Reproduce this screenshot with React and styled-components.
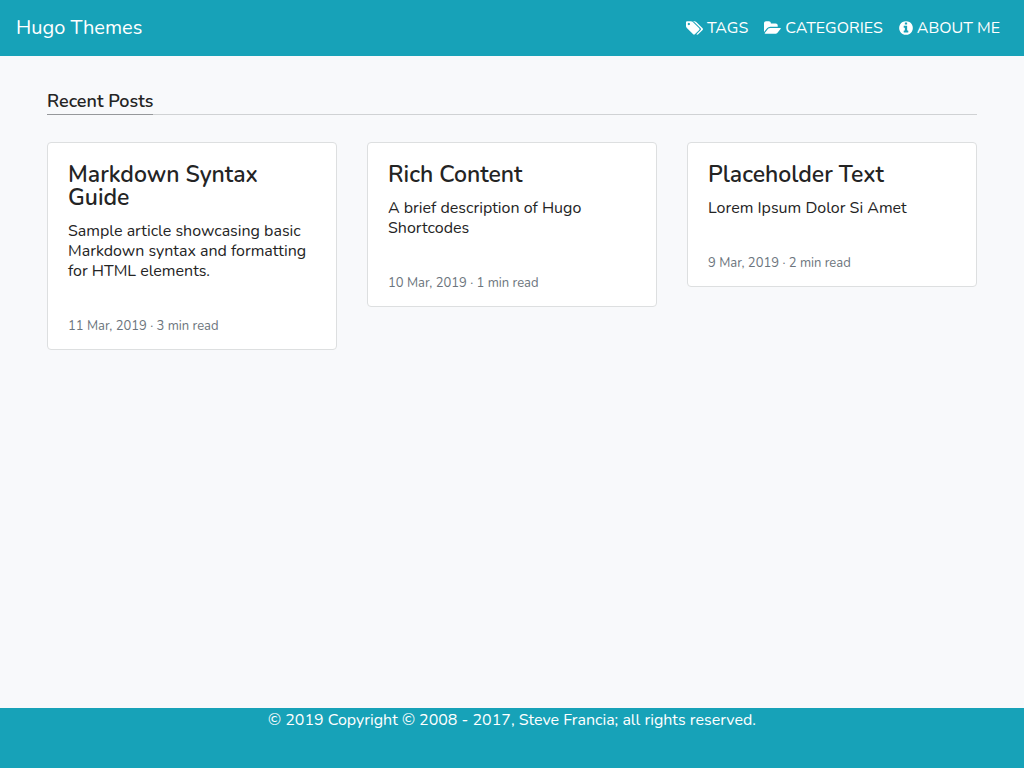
import React from "react";
import styled, { createGlobalStyle } from "styled-components";

const GlobalStyle = createGlobalStyle`
  *, *::before, *::after { box-sizing: border-box; }
  body {
    margin: 0;
    background: #f8f9fb;
    color: #242424;
    font-family: Nunito, Lato, "Noto Sans", sans-serif;
    font-size: 16px;
    line-height: 24px;
  }
`;

const Page = styled.div`
  display: flex;
  flex-direction: column;
  min-height: 100vh;
`;

const Navbar = styled.header`
  display: flex;
  align-items: center;
  justify-content: space-between;
  min-height: 56px;
  padding: 0 16px;
  background: #17a2b8;
`;

const Brand = styled.a`
  color: #fff;
  font-size: 20px;
  line-height: 30px;
  text-decoration: none;
`;

const NavLinks = styled.nav`
  display: flex;
`;

const NavLink = styled.a`
  display: flex;
  align-items: center;
  gap: 4px;
  padding: 8px;
  color: #fff;
  text-decoration: none;
  text-transform: uppercase;
`;

const Glyph = styled.svg`
  height: 16px;
  fill: currentColor;
`;

const Main = styled.main`
  flex: 1;
  width: 100%;
  max-width: 960px;
  margin: 0 auto;
  padding: 32px 15px;
`;

const SectionHeader = styled.div`
  display: flex;
  margin-bottom: 27px;
  border-bottom: 1px solid #d0d2d4;
`;

const SectionTitle = styled.h1`
  margin: 0 0 -1px;
  border-bottom: 1px solid #96989b;
  font-size: 18px;
  font-weight: 600;
  line-height: 26px;
`;

const CardGrid = styled.div`
  display: grid;
  grid-template-columns: repeat(auto-fit, minmax(260px, 1fr));
  align-items: start;
  gap: 30px;
`;

const Card = styled.article`
  padding: 20px 20px 14px;
  background: #fff;
  border: 1px solid #dddfe0;
  border-radius: 4px;
`;

const CardTitle = styled.h2`
  margin: 0 0 12px;
  font-size: 23px;
  font-weight: 600;
  line-height: 23px;
`;

const CardLink = styled.a`
  color: inherit;
  text-decoration: none;
`;

const Summary = styled.p`
  margin: 0 0 36px;
  line-height: 20px;
`;

const Meta = styled.p`
  margin: 0;
  color: #6c757d;
  font-size: 13px;
  line-height: 18px;
`;

const Footer = styled.footer`
  min-height: 60px;
  background: #17a2b8;
  color: #fff;
  text-align: center;
`;

const icons = {
  tags: {
    width: 17,
    box: "0 0 1904 1792",
    path: "M448 448q0-53-37.500-90.500t-90.500-37.500-90.500 37.500-37.500 90.500 37.500 90.500 90.500 37.500 90.500-37.500 37.500-90.500zm1067 576q0 53-37 90l-491 492q-39 37-91 37-53 0-90-37l-715-716q-38-37-64.500-101t-26.500-117v-416q0-52 38-90t90-38h416q53 0 117 26.500t102 64.500l715 714q37 39 37 91zm384 0q0 53-37 90l-491 492q-39 37-91 37-36 0-59-14t-53-45l470-470q37-37 37-90 0-52-37-91l-715-714q-38-38-102-64.500t-117-26.500h224q53 0 117 26.500t102 64.500l715 714q37 39 37 91z",
  },
  folder: {
    width: 17,
    box: "0 0 1904 1792",
    path: "M1879 952q0 31-31 66l-336 396q-43 51-120.500 86.500t-143.500 35.500h-1088q-34 0-60.500-13t-26.500-43q0-31 31-66l336-396q43-51 120.500-86.500t143.500-35.500h1088q34 0 60.500 13t26.500 43zm-343-344v160h-832q-94 0-197 47.500t-164 119.500l-337 396-5 6q0-4-.5-12.500t-.5-12.500v-960q0-92 66-158t158-66h320q92 0 158 66t66 158v32h544q92 0 158 66t66 158z",
  },
  info: {
    width: 14,
    box: "112 0 1568 1792",
    path: "M1152 1376v-160q0-14-9-23t-23-9h-96v-512q0-14-9-23t-23-9h-320q-14 0-23 9t-9 23v160q0 14 9 23t23 9h96v320h-96q-14 0-23 9t-9 23v160q0 14 9 23t23 9h448q14 0 23-9t9-23zm-128-896v-160q0-14-9-23t-23-9h-192q-14 0-23 9t-9 23v160q0 14 9 23t23 9h192q14 0 23-9t9-23zm640 416q0 209-103 385.500t-279.500 279.500-385.500 103-385.500-103-279.500-279.500-103-385.500 103-385.500 279.500-279.500 385.500-103 385.500 103 279.500 279.500 103 385.500z",
  },
};

const links = [
  { label: "Tags", icon: "tags", href: "#tags" },
  { label: "Categories", icon: "folder", href: "#categories" },
  { label: "About Me", icon: "info", href: "#about" },
];

const posts = [
  {
    title: "Markdown Syntax Guide",
    summary: "Sample article showcasing basic Markdown syntax and formatting for HTML elements.",
    meta: "11 Mar, 2019 · 3 min read",
    href: "#markdown-syntax",
  },
  {
    title: "Rich Content",
    summary: "A brief description of Hugo Shortcodes",
    meta: "10 Mar, 2019 · 1 min read",
    href: "#rich-content",
  },
  {
    title: "Placeholder Text",
    summary: "Lorem Ipsum Dolor Si Amet",
    meta: "9 Mar, 2019 · 2 min read",
    href: "#placeholder-text",
  },
];

function Icon({ name }) {
  const { width, box, path } = icons[name];
  return (
    <Glyph width={width} viewBox={box} aria-hidden="true">
      <path d={path} />
    </Glyph>
  );
}

export default function App() {
  return (
    <Page>
      <GlobalStyle />
      <Navbar>
        <Brand href="#home">Hugo Themes</Brand>
        <NavLinks>
          {links.map((link) => (
            <NavLink key={link.label} href={link.href}>
              <Icon name={link.icon} />
              {link.label}
            </NavLink>
          ))}
        </NavLinks>
      </Navbar>
      <Main>
        <SectionHeader>
          <SectionTitle>Recent Posts</SectionTitle>
        </SectionHeader>
        <CardGrid>
          {posts.map((post) => (
            <Card key={post.title}>
              <CardTitle>
                <CardLink href={post.href}>{post.title}</CardLink>
              </CardTitle>
              <Summary>{post.summary}</Summary>
              <Meta>{post.meta}</Meta>
            </Card>
          ))}
        </CardGrid>
      </Main>
      <Footer>© 2019 Copyright © 2008 - 2017, Steve Francia; all rights reserved.</Footer>
    </Page>
  );
}
